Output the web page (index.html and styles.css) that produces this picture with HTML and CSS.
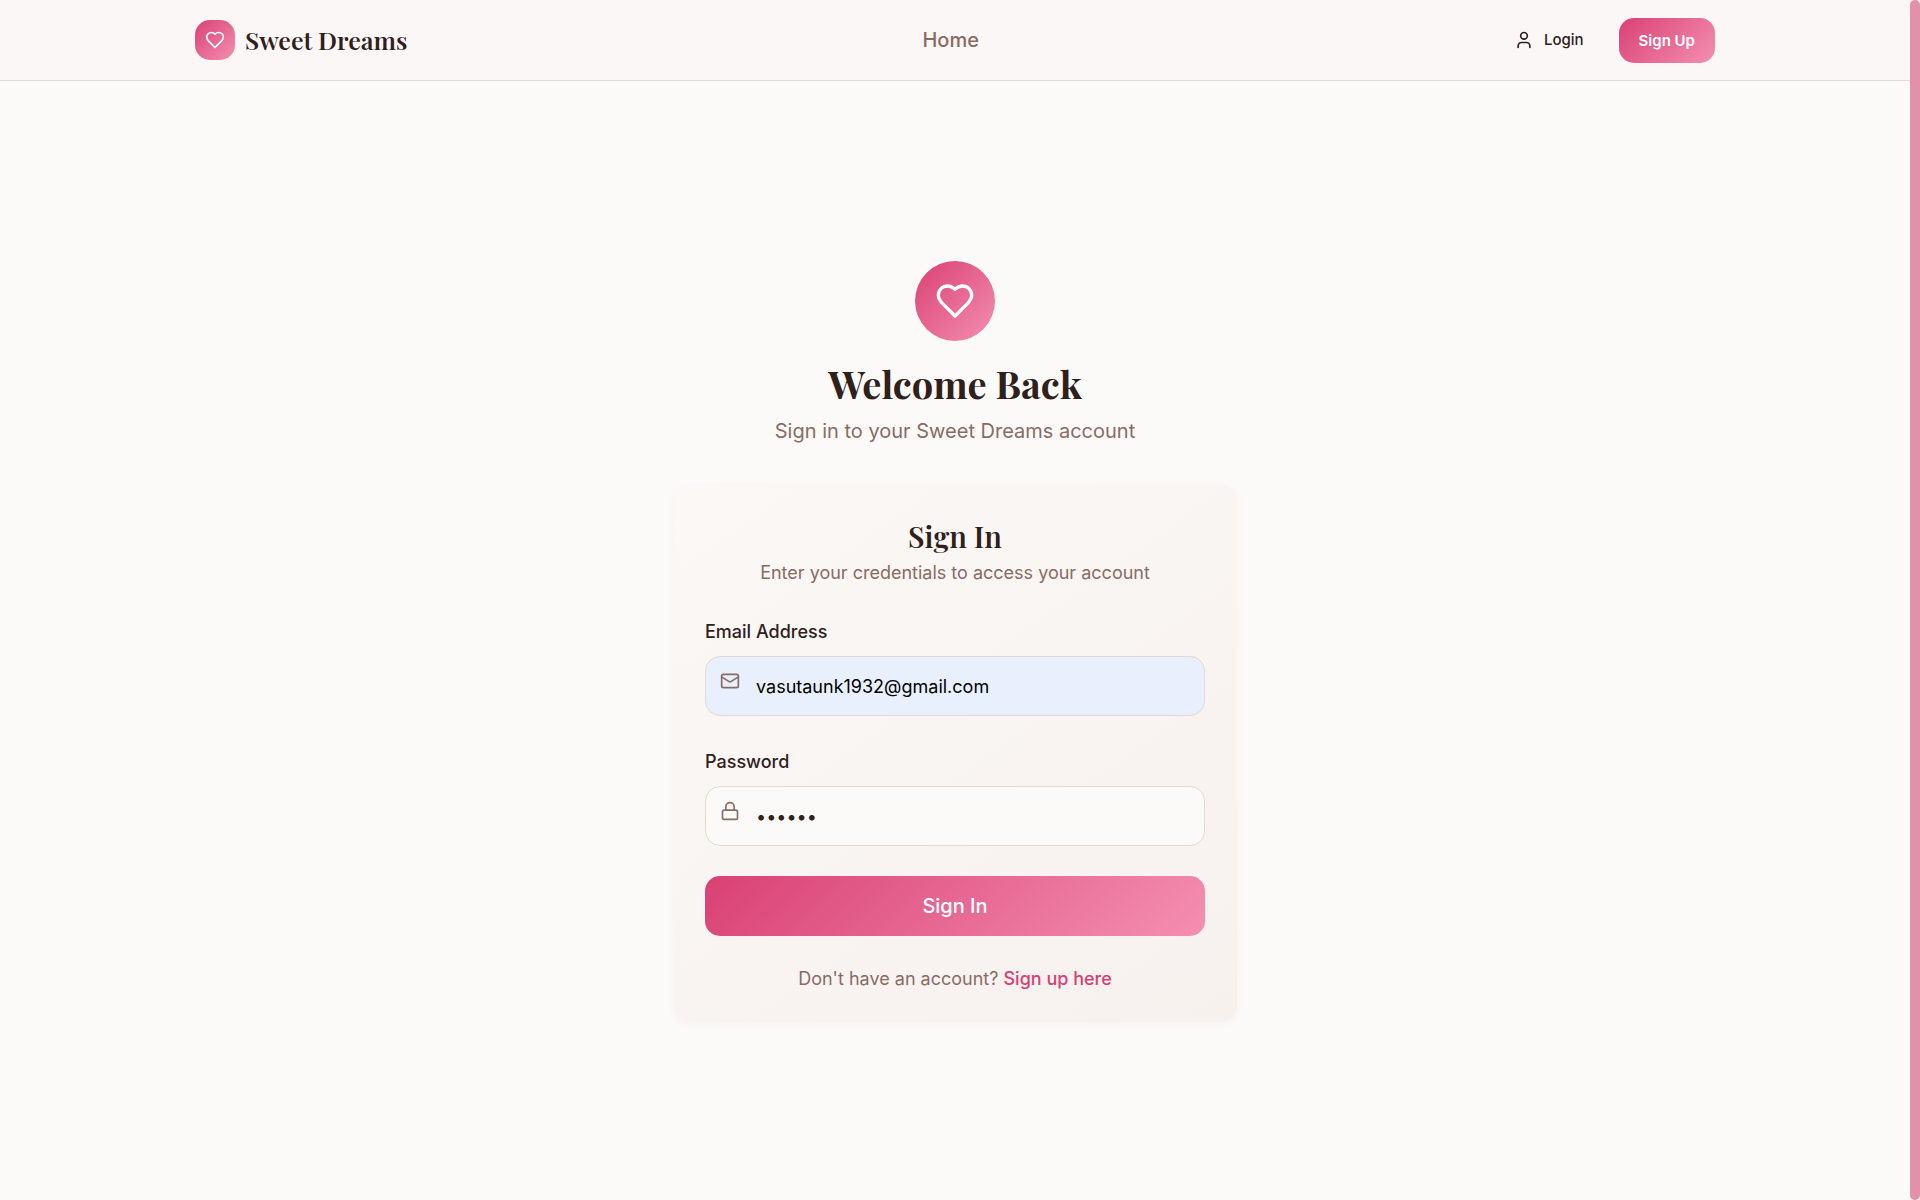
FILE: index.html
```html
<!DOCTYPE html>
<html lang="en">
<head>
<meta charset="utf-8">
<meta name="viewport" content="width=device-width, initial-scale=1">
<title>Sweet Dreams</title>
<link rel="stylesheet" href="styles.css">
</head>
<body>
<div class="page">
  <header class="header">
    <div class="header-inner">
      <a class="brand" href="#">
        <span class="brand-mark">
          <svg class="icon icon-sm" viewBox="0 0 24 24" aria-hidden="true"><path d="M19 14c1.49-1.46 3-3.21 3-5.5A5.5 5.5 0 0 0 16.5 3c-1.76 0-3 .5-4.5 2-1.5-1.5-2.74-2-4.5-2A5.5 5.5 0 0 0 2 8.5c0 2.3 1.5 4.05 3 5.5l7 7Z"/></svg>
        </span>
        <span class="brand-name">Sweet Dreams</span>
      </a>
      <nav class="nav"><a href="#">Home</a></nav>
      <div class="actions">
        <a class="login" href="#">
          <svg class="icon icon-sm" viewBox="0 0 24 24" aria-hidden="true"><path d="M19 21v-2a4 4 0 0 0-4-4H9a4 4 0 0 0-4 4v2"/><circle cx="12" cy="7" r="4"/></svg>
          Login
        </a>
        <button class="button button-small" type="button">Sign Up</button>
      </div>
    </div>
  </header>
  <main class="main">
    <div class="intro">
      <div class="hero-mark">
        <svg class="icon icon-lg" viewBox="0 0 24 24" aria-hidden="true"><path d="M19 14c1.49-1.46 3-3.21 3-5.5A5.5 5.5 0 0 0 16.5 3c-1.76 0-3 .5-4.5 2-1.5-1.5-2.74-2-4.5-2A5.5 5.5 0 0 0 2 8.5c0 2.3 1.5 4.05 3 5.5l7 7Z"/></svg>
      </div>
      <h1>Welcome Back</h1>
      <p>Sign in to your Sweet Dreams account</p>
    </div>
    <section class="card">
      <div class="card-head">
        <h2>Sign In</h2>
        <p>Enter your credentials to access your account</p>
      </div>
      <form class="form">
        <div class="field">
          <label for="email">Email Address</label>
          <div class="control">
            <svg class="icon icon-sm" viewBox="0 0 24 24" aria-hidden="true"><rect x="2" y="4" width="20" height="16" rx="2"/><path d="m22 7-8.97 5.7a1.94 1.94 0 0 1-2.06 0L2 7"/></svg>
            <input class="filled" id="email" type="email" value="vasutaunk1932@gmail.com">
          </div>
        </div>
        <div class="field">
          <label for="password">Password</label>
          <div class="control">
            <svg class="icon icon-sm" viewBox="0 0 24 24" aria-hidden="true"><rect x="3" y="11" width="18" height="11" rx="2"/><path d="M7 11V7a5 5 0 0 1 10 0v4"/></svg>
            <input id="password" type="password" value="secret">
          </div>
        </div>
        <button class="button button-large" type="submit">Sign In</button>
      </form>
      <p class="signup">Don't have an account? <a href="#">Sign up here</a></p>
    </section>
  </main>
</div>
<div class="scroll-track"><div class="scroll-thumb"></div></div>
</body>
</html>
```
FILE: styles.css
```css
* { box-sizing: border-box; }

body {
  margin: 0;
  min-height: 100vh;
  display: grid;
  grid-template-columns: minmax(0, 1fr) 10px;
  background: #fcfaf8;
  color: #30201c;
  font: 18px/26px Inter, sans-serif;
}

h1, h2, p { margin: 0; }
a { color: inherit; text-decoration: none; }

.page { display: flex; flex-direction: column; }

.icon {
  flex: none;
  fill: none;
  stroke: currentColor;
  stroke-width: 2;
  stroke-linecap: round;
  stroke-linejoin: round;
}
.icon-sm { width: 20px; height: 20px; }
.icon-lg { width: 40px; height: 40px; }

.header {
  background: #fbf7f6;
  border-bottom: 1px solid #e5d8d0;
}
.header-inner {
  display: flex;
  align-items: center;
  justify-content: space-between;
  max-width: 1560px;
  height: 80px;
  margin: 0 auto;
  padding: 0 20px;
}

.brand { display: flex; align-items: center; gap: 10px; }
.brand-mark, .hero-mark {
  display: flex;
  align-items: center;
  justify-content: center;
  background: linear-gradient(135deg, #d94174, #f48fb1);
  color: #fff;
}
.brand-mark { width: 40px; height: 40px; border-radius: 15px; }
.brand-name {
  font: 600 25px/40px "Playfair Display", "Liberation Serif", serif;
}

.nav { color: #8a6b64; font-size: 20px; font-weight: 500; }

.actions {
  display: flex;
  align-items: center;
  gap: 15px;
}
.login {
  display: flex;
  align-items: center;
  gap: 10px;
  padding: 0 20px;
  font-size: 15px;
  font-weight: 500;
}

.button {
  border: 0;
  border-radius: 15px;
  background: linear-gradient(135deg, #d94174, #f48fb1);
  color: #fff;
  font-family: inherit;
}
.button-small { height: 45px; padding: 0 20px; font-size: 15px; font-weight: 600; }
.button-large { height: 60px; font-size: 20px; font-weight: 500; }

.main {
  flex: 1;
  display: flex;
  flex-direction: column;
  align-items: center;
  justify-content: center;
  gap: 40px;
  padding: 22px 20px 20px;
}

.intro {
  display: flex;
  flex-direction: column;
  align-items: center;
  text-align: center;
}
.hero-mark { width: 80px; height: 80px; margin-bottom: 20px; border-radius: 50%; }
h1 { font: 700 38px/46px "Playfair Display", "Liberation Serif", serif; }
.intro p { padding-top: 10px; font-size: 20px; line-height: 28px; color: #8a6b64; }

.card {
  width: 100%;
  max-width: 564px;
  padding: 30px 32px;
  border-radius: 15px;
  background: linear-gradient(145deg, #fbf8f6, #f7f1ee);
  box-shadow: 0 2px 8px rgba(48, 32, 28, 0.03);
}
.card-head {
  display: flex;
  flex-direction: column;
  gap: 3px;
  text-align: center;
  color: #8a6b64;
}
h2 {
  color: #30201c;
  font: 600 29px/42px "Playfair Display", "Liberation Serif", serif;
}

.form { display: flex; flex-direction: column; gap: 30px; padding: 30px 0; }
.field { display: flex; flex-direction: column; gap: 8px; }
.field label { font-weight: 500; line-height: 32px; }
.control { position: relative; }
.control .icon { position: absolute; top: 15px; left: 15px; color: #8a6b64; }
.control input {
  display: block;
  width: 100%;
  height: 60px;
  padding: 0 15px 0 50px;
  border: 1px solid #e5d8d0;
  border-radius: 15px;
  background: #fcfaf8;
  color: #30201c;
  font: inherit;
}
.control input.filled { background: #e8f0fe; color: #000; }

.signup { text-align: center; color: #8a6b64; }
.signup a { color: #d93f73; font-weight: 500; }

.scroll-track { background: #f5efeb; }
.scroll-thumb { height: 100%; border-radius: 5px; background: #e192aa; }
```
